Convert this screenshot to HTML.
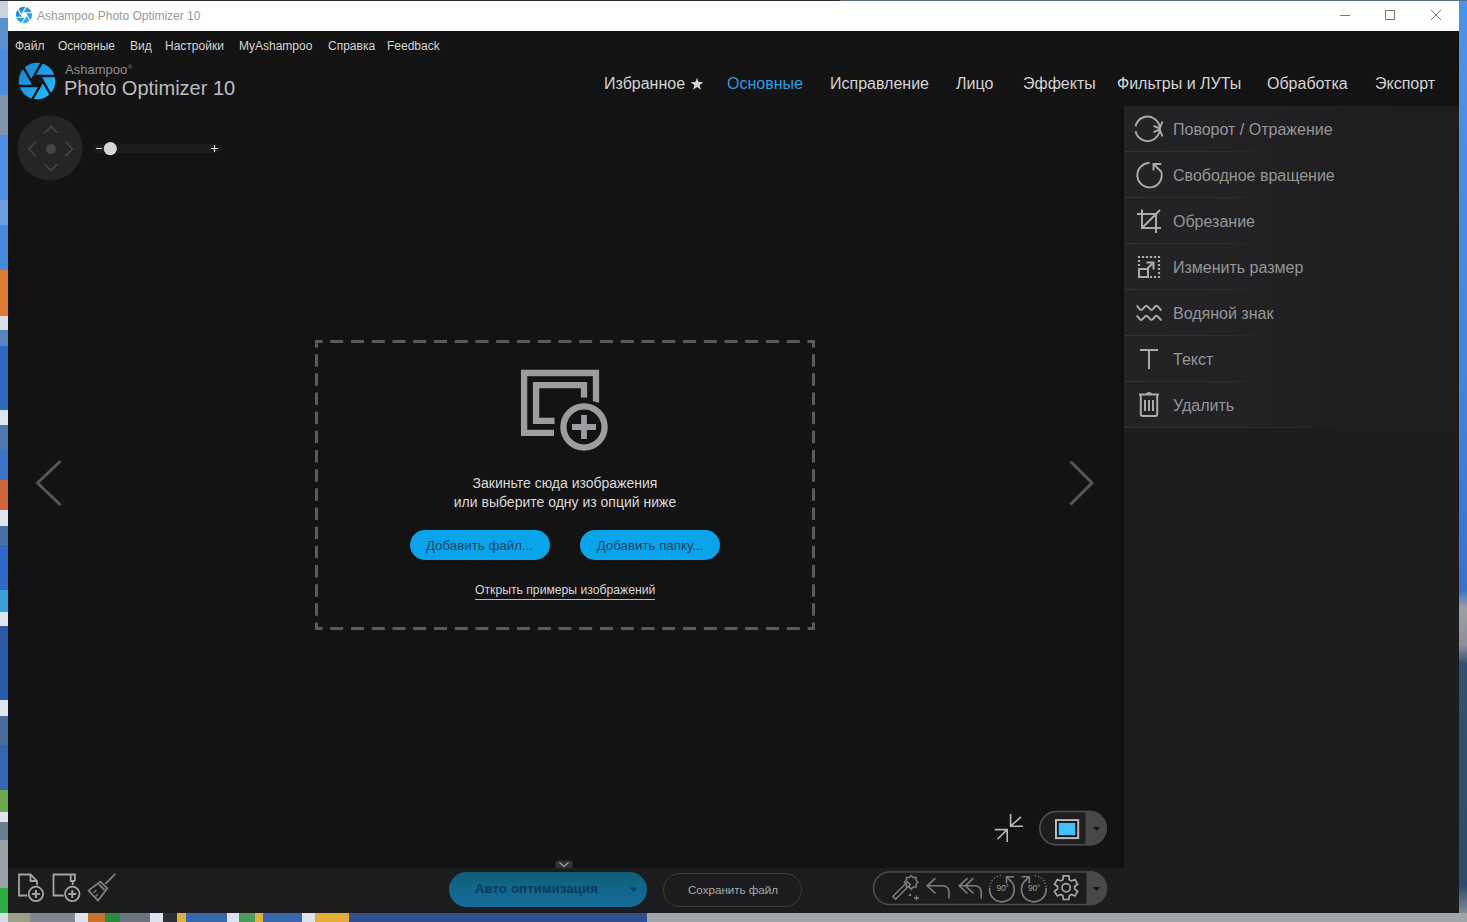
<!DOCTYPE html>
<html><head><meta charset="utf-8">
<style>
*{margin:0;padding:0;box-sizing:border-box}
html,body{width:1467px;height:922px;overflow:hidden;background:#131313;font-family:"Liberation Sans",sans-serif}
.a{position:absolute;white-space:nowrap}
svg{position:absolute;left:0;top:0;overflow:visible}
.menu{font-size:12px;color:#d6d6d6;top:39px}
.nav{font-size:16px;color:#d4d4d4;top:75px}
.pt{position:absolute;left:1173px;font-size:16px;color:#959595;white-space:nowrap}
.sep{position:absolute;left:1124px;height:1px;width:150px;background:linear-gradient(90deg,#333337 0%,#303034 55%,rgba(46,46,50,0) 100%)}
</style></head><body>
<!-- desktop strips -->
<div class="a" style="left:0;top:0px;width:8px;height:18px;background:#c9d3df"></div>
<div class="a" style="left:0;top:18px;width:8px;height:32px;background:#5c8fd0"></div>
<div class="a" style="left:0;top:50px;width:8px;height:45px;background:#4a8de0"></div>
<div class="a" style="left:0;top:95px;width:8px;height:40px;background:#7d93ad"></div>
<div class="a" style="left:0;top:135px;width:8px;height:65px;background:#4d8fe2"></div>
<div class="a" style="left:0;top:200px;width:8px;height:25px;background:#6b9de0"></div>
<div class="a" style="left:0;top:225px;width:8px;height:45px;background:#4688dc"></div>
<div class="a" style="left:0;top:270px;width:8px;height:46px;background:#e07a2e"></div>
<div class="a" style="left:0;top:316px;width:8px;height:14px;background:#d6e0ec"></div>
<div class="a" style="left:0;top:330px;width:8px;height:16px;background:#5a86c0"></div>
<div class="a" style="left:0;top:346px;width:8px;height:64px;background:#2f69bf"></div>
<div class="a" style="left:0;top:410px;width:8px;height:15px;background:#dbe4ef"></div>
<div class="a" style="left:0;top:425px;width:8px;height:25px;background:#4f78b0"></div>
<div class="a" style="left:0;top:450px;width:8px;height:30px;background:#3b74c8"></div>
<div class="a" style="left:0;top:480px;width:8px;height:30px;background:#d0643a"></div>
<div class="a" style="left:0;top:510px;width:8px;height:16px;background:#dde5ef"></div>
<div class="a" style="left:0;top:526px;width:8px;height:19px;background:#4a70a8"></div>
<div class="a" style="left:0;top:545px;width:8px;height:45px;background:#2e68c8"></div>
<div class="a" style="left:0;top:590px;width:8px;height:22px;background:#37a0d8"></div>
<div class="a" style="left:0;top:612px;width:8px;height:14px;background:#dde5ef"></div>
<div class="a" style="left:0;top:626px;width:8px;height:74px;background:#2a5aa8"></div>
<div class="a" style="left:0;top:700px;width:8px;height:16px;background:#dde5ef"></div>
<div class="a" style="left:0;top:716px;width:8px;height:29px;background:#4a6a98"></div>
<div class="a" style="left:0;top:745px;width:8px;height:45px;background:#3566b0"></div>
<div class="a" style="left:0;top:790px;width:8px;height:22px;background:#6aa84a"></div>
<div class="a" style="left:0;top:812px;width:8px;height:10px;background:#dde5ef"></div>
<div class="a" style="left:0;top:822px;width:8px;height:18px;background:#6a7f90"></div>
<div class="a" style="left:0;top:840px;width:8px;height:48px;background:#9aa0a8"></div>
<div class="a" style="left:0;top:888px;width:8px;height:25px;background:#2cae46"></div>
<div class="a" style="left:0;top:913px;width:8px;height:9px;background:#8f949c"></div>
<div class="a" style="left:1459px;top:0;width:8px;height:922px;background:linear-gradient(180deg,#4d92ea 0%,#4585dc 40%,#3b72c8 64%,#9aa0a6 66%,#8a9098 70%,#34506e 72%,#2f4a68 96%,#9aa0a8 100%)"></div>
<div class="a" style="left:0px;top:913px;width:8px;height:9px;background:#d6dde6"></div>
<div class="a" style="left:8px;top:913px;width:22px;height:9px;background:#9a9f86"></div>
<div class="a" style="left:30px;top:913px;width:45px;height:9px;background:#7f8794"></div>
<div class="a" style="left:75px;top:913px;width:13px;height:9px;background:#dce3ec"></div>
<div class="a" style="left:88px;top:913px;width:17px;height:9px;background:#c8702e"></div>
<div class="a" style="left:105px;top:913px;width:15px;height:9px;background:#2a8a40"></div>
<div class="a" style="left:120px;top:913px;width:30px;height:9px;background:#6a7380"></div>
<div class="a" style="left:150px;top:913px;width:13px;height:9px;background:#dce3ec"></div>
<div class="a" style="left:163px;top:913px;width:14px;height:9px;background:#2a2f38"></div>
<div class="a" style="left:177px;top:913px;width:9px;height:9px;background:#e0b040"></div>
<div class="a" style="left:186px;top:913px;width:41px;height:9px;background:#3a66ac"></div>
<div class="a" style="left:227px;top:913px;width:12px;height:9px;background:#dce3ec"></div>
<div class="a" style="left:239px;top:913px;width:16px;height:9px;background:#4a9a60"></div>
<div class="a" style="left:255px;top:913px;width:8px;height:9px;background:#e0b040"></div>
<div class="a" style="left:263px;top:913px;width:39px;height:9px;background:#3a66ac"></div>
<div class="a" style="left:302px;top:913px;width:13px;height:9px;background:#dce3ec"></div>
<div class="a" style="left:315px;top:913px;width:34px;height:9px;background:#e4ae34"></div>
<div class="a" style="left:349px;top:913px;width:298px;height:9px;background:#2f508e"></div>
<div class="a" style="left:647px;top:913px;width:820px;height:9px;background:#a0a4ab"></div>
<div class="a" style="left:0;top:0;width:840px;height:1px;background:#2e2e2e"></div><div class="a" style="left:840px;top:0;width:627px;height:1px;background:#5a6e88"></div>

<!-- title bar -->
<div class="a" style="left:8px;top:1px;width:1451px;height:30px;background:#fff"></div>
<svg width="1467" height="40">
  <defs><linearGradient id="gs" x1="0" y1="0" x2="1" y2="1"><stop offset="0" stop-color="#1584d8"/><stop offset="1" stop-color="#34b8f4"/></linearGradient></defs>
  <circle cx="24" cy="15" r="8.2" fill="url(#gs)"/>
  <path d="M26.60,15.00 L25.30,17.25 L22.70,17.25 L21.40,15.00 L22.70,12.75 L25.30,12.75Z" fill="#fff"/>
  <path d="M26.90,14.48L21.26,24.25M25.90,17.25L14.62,17.25M23.00,17.77L17.36,8.00M21.10,15.52L26.74,5.75M22.10,12.75L33.38,12.75M25.00,12.23L30.64,22.00" stroke="#fff" stroke-width="1.2" fill="none"/>
  <line x1="1340" y1="15.5" x2="1350" y2="15.5" stroke="#777" stroke-width="1"/>
  <rect x="1385.5" y="10.5" width="9" height="9" fill="none" stroke="#777" stroke-width="1"/>
  <path d="M1431 10L1441 20M1441 10L1431 20" stroke="#777" stroke-width="1"/>
</svg>
<div class="a" style="left:37px;top:9px;font-size:12px;color:#999">Ashampoo Photo Optimizer 10</div>

<!-- menu -->
<div class="a menu" style="left:15px">Файл</div>
<div class="a menu" style="left:58px">Основные</div>
<div class="a menu" style="left:130px">Вид</div>
<div class="a menu" style="left:165px">Настройки</div>
<div class="a menu" style="left:239px">MyAshampoo</div>
<div class="a menu" style="left:328px">Справка</div>
<div class="a menu" style="left:387px">Feedback</div>

<!-- logo -->
<svg width="100" height="110">
  <defs><linearGradient id="gl" x1="0" y1="0" x2="1" y2="1"><stop offset="0" stop-color="#1a7fd0"/><stop offset="0.5" stop-color="#16a0ee"/><stop offset="1" stop-color="#2ec0ff"/></linearGradient></defs>
  <circle cx="37" cy="81" r="18.3" fill="url(#gl)"/>
  <path d="M42.80,81.00 L39.90,86.02 L34.10,86.02 L31.20,81.00 L34.10,75.98 L39.90,75.98Z" fill="#131313"/>
  <path d="M43.10,80.48L31.80,100.05M40.50,86.02L17.90,86.02M34.40,86.54L23.10,66.97M30.90,81.52L42.20,61.95M33.50,75.98L56.10,75.98M39.60,75.46L50.90,95.03" stroke="#131313" stroke-width="2.4" fill="none"/>
</svg>
<div class="a" style="left:65px;top:62px;font-size:13px;color:#8e8e8e">Ashampoo<span style="font-size:5px;position:relative;top:-5px;left:1px">®</span></div>
<div class="a" style="left:64px;top:77px;font-size:20px;color:#bdbdbd">Photo Optimizer 10</div>

<!-- nav -->
<div class="a nav" style="left:604px">Избранное</div>
<svg width="720" height="100"><path d="M697.00,77.70 L698.59,82.12 L703.28,82.26 L699.57,85.13 L700.88,89.64 L697.00,87.00 L693.12,89.64 L694.43,85.13 L690.72,82.26 L695.41,82.12Z" fill="#d4d4d4"/></svg>
<div class="a nav" style="left:727px;color:#319de2">Основные</div>
<div class="a nav" style="left:830px">Исправление</div>
<div class="a nav" style="left:956px">Лицо</div>
<div class="a nav" style="left:1023px">Эффекты</div>
<div class="a nav" style="left:1117px">Фильтры и ЛУТы</div>
<div class="a nav" style="left:1267px">Обработка</div>
<div class="a nav" style="left:1375px">Экспорт</div>

<!-- right panel -->
<div class="a" style="left:1124px;top:106px;width:335px;height:807px;background:#1d1d1f"></div>
<div class="a" style="left:1124px;top:106px;width:335px;height:322px;background:linear-gradient(90deg,#232326 0%,#222225 35%,#1e1e20 68%,#1d1d1f 100%)"></div>
<div class="a" style="left:1119px;top:106px;width:5px;height:807px;background:linear-gradient(90deg,rgba(0,0,0,0),rgba(0,0,0,0.25))"></div>
<div class="sep" style="top:151px"></div>
<div class="sep" style="top:197px"></div>
<div class="sep" style="top:243px"></div>
<div class="sep" style="top:289px"></div>
<div class="sep" style="top:335px"></div>
<div class="sep" style="top:381px"></div>
<div class="sep" style="top:427px;width:225px"></div>
<div class="pt" style="top:121px">Поворот / Отражение</div>
<div class="pt" style="top:167px">Свободное вращение</div>
<div class="pt" style="top:213px">Обрезание</div>
<div class="pt" style="top:259px">Изменить размер</div>
<div class="pt" style="top:305px">Водяной знак</div>
<div class="pt" style="top:351px">Текст</div>
<div class="pt" style="top:397px">Удалить</div>
<svg width="1467" height="922" style="pointer-events:none">
 <g stroke="#ababab" fill="none" stroke-width="2">
  <!-- rotate/flip -->
  <path d="M1135.6 131.3 A12.2 12.2 0 1 0 1135.6 126.3" stroke-width="1.9"/>
  <path d="M1162.5 121.5L1159.5 129L1162.5 136.5M1153.5 125.8L1159.5 128.3M1153.5 132.2L1159.5 129.7" stroke-width="1.9"/>
  <!-- free rotate -->
  <path d="M1149.5 163 A12.2 12.2 0 1 0 1161 171" stroke-width="1.9"/>
  <path d="M1153.5 170.5V164H1161.2M1153.5 164L1161 171.5" stroke-width="1.9"/>
  <!-- crop -->
  <path d="M1142 209.5V228H1161M1137 214H1156V233M1142 228L1160 210"/>
  <!-- resize -->
  <rect x="1139" y="269" width="9" height="8"/>
  <path d="M1147 269L1153.5 262.5M1146.5 262.5H1153.5V269.5"/>
  <path d="M1139 257h0M1143 257h0M1147 257h0M1151 257h0M1155 257h0M1159 257h0M1159 261h0M1159 265h0M1159 269h0M1159 273h0M1159 277h0M1155 277h0M1151 277h0M1139 261h0M1139 265h0" stroke-width="2.2" stroke-linecap="square"/>
  <!-- watermark -->
  <path d="M1136.5 305.8C1138.6 306.5 1139.4 310 1141.2 310S1144.5 305.8 1146.4 305.8S1149.7 310 1151.5 310S1154.7 305.8 1156.5 305.8S1159.6 309.5 1161.5 310.2"/>
  <path d="M1136.5 315.8C1138.6 316.5 1139.4 320 1141.2 320S1144.5 315.8 1146.4 315.8S1149.7 320 1151.5 320S1154.7 315.8 1156.5 315.8S1159.6 319.5 1161.5 320.2"/>
  <!-- text T -->
  <path d="M1140 350H1158M1149 350V369"/>
  <!-- trash -->
  <path d="M1139 394.5H1159M1146 394.5Q1149 391.5 1152 394.5M1140.8 394.5V414A2 2 0 0 0 1142.8 416H1155.2A2 2 0 0 0 1157.2 414V394.5M1145 400V411M1149 400V411M1153 400V411"/>
 </g>
</svg>

<!-- joystick + slider -->
<svg width="260" height="200">
  <circle cx="50" cy="148" r="32.5" fill="#252527"/>
  <circle cx="51" cy="149" r="5" fill="#454547"/>
  <g stroke="#444446" stroke-width="1.6" fill="none">
    <path d="M44.5 133L51 126.5L57.5 133"/>
    <path d="M44.5 164L51 170.5L57.5 164"/>
    <path d="M36 141.5L29 149L36 156.5"/>
    <path d="M65.5 141.5L72.5 149L65.5 156.5"/>
  </g>
  <rect x="93" y="144" width="128" height="9" rx="4.5" fill="#1c1c1e"/>
  <path d="M96 148.5H102M211 148.5H218M214.5 145V152" stroke="#d8d8d8" stroke-width="1.2"/>
  <circle cx="110.3" cy="148.6" r="6.6" fill="#d6d6da"/>
</svg>

<!-- side arrows -->
<svg width="1467" height="922" style="pointer-events:none">
  <path d="M60.5 461L37.5 483L60.5 505" stroke="#555557" stroke-width="3" fill="none"/>
  <path d="M1070.5 461.5L1092 483L1070.5 504.5" stroke="#555557" stroke-width="3" fill="none"/>
  <!-- dashed drop zone -->
  <path d="M330.2 340.0h13.0v3.0h-13.0zM351.0 340.0h13.0v3.0h-13.0zM371.8 340.0h13.0v3.0h-13.0zM392.5 340.0h13.0v3.0h-13.0zM413.2 340.0h13.0v3.0h-13.0zM434.0 340.0h13.0v3.0h-13.0zM454.8 340.0h13.0v3.0h-13.0zM475.5 340.0h13.0v3.0h-13.0zM496.2 340.0h13.0v3.0h-13.0zM517.0 340.0h13.0v3.0h-13.0zM537.8 340.0h13.0v3.0h-13.0zM558.5 340.0h13.0v3.0h-13.0zM579.2 340.0h13.0v3.0h-13.0zM600.0 340.0h13.0v3.0h-13.0zM620.8 340.0h13.0v3.0h-13.0zM641.5 340.0h13.0v3.0h-13.0zM662.2 340.0h13.0v3.0h-13.0zM683.0 340.0h13.0v3.0h-13.0zM703.8 340.0h13.0v3.0h-13.0zM724.5 340.0h13.0v3.0h-13.0zM745.2 340.0h13.0v3.0h-13.0zM766.0 340.0h13.0v3.0h-13.0zM786.8 340.0h13.0v3.0h-13.0zM330.2 627.0h13.0v3.0h-13.0zM351.0 627.0h13.0v3.0h-13.0zM371.8 627.0h13.0v3.0h-13.0zM392.5 627.0h13.0v3.0h-13.0zM413.2 627.0h13.0v3.0h-13.0zM434.0 627.0h13.0v3.0h-13.0zM454.8 627.0h13.0v3.0h-13.0zM475.5 627.0h13.0v3.0h-13.0zM496.2 627.0h13.0v3.0h-13.0zM517.0 627.0h13.0v3.0h-13.0zM537.8 627.0h13.0v3.0h-13.0zM558.5 627.0h13.0v3.0h-13.0zM579.2 627.0h13.0v3.0h-13.0zM600.0 627.0h13.0v3.0h-13.0zM620.8 627.0h13.0v3.0h-13.0zM641.5 627.0h13.0v3.0h-13.0zM662.2 627.0h13.0v3.0h-13.0zM683.0 627.0h13.0v3.0h-13.0zM703.8 627.0h13.0v3.0h-13.0zM724.5 627.0h13.0v3.0h-13.0zM745.2 627.0h13.0v3.0h-13.0zM766.0 627.0h13.0v3.0h-13.0zM786.8 627.0h13.0v3.0h-13.0zM315.0 354.2h3.0v12.5h-3.0zM315.0 373.3h3.0v12.5h-3.0zM315.0 392.5h3.0v12.5h-3.0zM315.0 411.7h3.0v12.5h-3.0zM315.0 430.8h3.0v12.5h-3.0zM315.0 450.0h3.0v12.5h-3.0zM315.0 469.2h3.0v12.5h-3.0zM315.0 488.3h3.0v12.5h-3.0zM315.0 507.5h3.0v12.5h-3.0zM315.0 526.7h3.0v12.5h-3.0zM315.0 545.8h3.0v12.5h-3.0zM315.0 565.0h3.0v12.5h-3.0zM315.0 584.2h3.0v12.5h-3.0zM315.0 603.3h3.0v12.5h-3.0zM812.0 354.2h3.0v12.5h-3.0zM812.0 373.3h3.0v12.5h-3.0zM812.0 392.5h3.0v12.5h-3.0zM812.0 411.7h3.0v12.5h-3.0zM812.0 430.8h3.0v12.5h-3.0zM812.0 450.0h3.0v12.5h-3.0zM812.0 469.2h3.0v12.5h-3.0zM812.0 488.3h3.0v12.5h-3.0zM812.0 507.5h3.0v12.5h-3.0zM812.0 526.7h3.0v12.5h-3.0zM812.0 545.8h3.0v12.5h-3.0zM812.0 565.0h3.0v12.5h-3.0zM812.0 584.2h3.0v12.5h-3.0zM812.0 603.3h3.0v12.5h-3.0zM315.0 340.0h7.5v3.0h-7.5zM315.0 340.0h3.0v7.5h-3.0zM807.5 340.0h7.5v3.0h-7.5zM812.0 340.0h3.0v7.5h-3.0zM315.0 627.0h7.5v3.0h-7.5zM315.0 622.5h3.0v7.5h-3.0zM807.5 627.0h7.5v3.0h-7.5zM812.0 622.5h3.0v7.5h-3.0z" fill="#5a5a5a"/>
  <!-- drop icon -->
  <g fill="none" stroke="#9d9da1" stroke-width="6.3">
    <path d="M554 432.9H524.1V373H596V402.5"/>
    <path d="M554.5 420.8H536.1V385.1H584V397.5"/>
  </g>
  <circle cx="584" cy="427" r="27.5" fill="#131313"/>
  <circle cx="584" cy="427" r="20.6" fill="none" stroke="#9d9da1" stroke-width="6.3"/>
  <path d="M572 427H596M584 415V439" stroke="#9d9da1" stroke-width="5.8"/>
</svg>
<div class="a" style="left:315px;top:474px;width:500px;text-align:center;font-size:14px;line-height:19px;color:#dadada">Закиньте сюда изображения<br>или выберите одну из опций ниже</div>
<div class="a" style="left:409.5px;top:530px;width:140px;height:30px;border-radius:15px;background:#0aa4eb;color:#17456a;font-size:13.3px;text-align:center;line-height:32px">Добавить файл...</div>
<div class="a" style="left:580px;top:530px;width:140px;height:30px;border-radius:15px;background:#0aa4eb;color:#17456a;font-size:13.3px;text-align:center;line-height:32px">Добавить папку...</div>
<div class="a" style="left:475px;top:583px;font-size:12.2px;color:#d8d8d8">Открыть примеры изображений</div>
<div class="a" style="left:475px;top:598.5px;width:180px;height:1px;background:#bdbdbd"></div>

<!-- view controls -->
<svg width="1467" height="922" style="pointer-events:none">
  <g stroke="#b8b8b8" stroke-width="1.6" fill="none">
    <path d="M1021 816.8L1010.6 826.2M1010.6 814V826.2H1023"/>
    <path d="M997.4 839.2L1007.2 829.6M994.8 829.6H1007.2V842"/>
  </g>
  <rect x="1039.8" y="811.6" width="66.4" height="33.2" rx="16.6" fill="#1e1e20" stroke="#505052" stroke-width="1.5"/>
  <path d="M1085.5 810.85H1089.6A17.35 17.35 0 0 1 1089.6 845.55H1085.5Z" fill="#48484a"/>
  <path d="M1093 827L1100 827L1096.5 831Z" fill="#141414"/>
  <rect x="1055" y="819.1" width="24.2" height="20" fill="#bcbcc0"/>
  <rect x="1057" y="821.1" width="20.2" height="16" fill="#111114"/>
  <rect x="1058.7" y="822.9" width="16.6" height="12.3" fill="#3fc3f8"/>
</svg>

<!-- bottom toolbar -->
<div class="a" style="left:8px;top:868px;width:1116px;height:45px;background:#1c1c1e"></div>
<svg width="1467" height="922" style="pointer-events:none">
  <!-- add file -->
  <g stroke="#a4a4a4" stroke-width="1.8" fill="none">
    <path d="M36.5 895.5H19V874.5H30.5L37 881V886"/>
    <path d="M30.5 874.5V881H37"/>
    <circle cx="35.9" cy="893.9" r="8.9" fill="#1c1c1e" stroke="none"/>
    <circle cx="35.9" cy="893.9" r="7.2"/>
    <path d="M31.9 893.9H39.9M35.9 889.9V897.9" stroke-width="2"/>
    <!-- add folder-file -->
    <path d="M72.5 895.5H53.5V874.5H74.9V881"/>
    <path d="M70.7 874.5V881H74.9M72.7 881V886"/>
    <circle cx="72.3" cy="893.9" r="8.9" fill="#1c1c1e" stroke="none"/>
    <circle cx="72.3" cy="893.9" r="7.2"/>
    <path d="M68.3 893.9H76.3M72.3 889.9V897.9" stroke-width="2"/>
  </g>
  <g stroke="#7e7e7e" stroke-width="1.8" fill="none">
    <path d="M115.3 873.8L105.4 883.9"/>
    <path d="M100.3 881.6L107.3 888.4L98 900.6L88.5 890.5Z"/>
    <path d="M98.6 884.2L104.6 890"/>
    <path d="M96.4 889.9L93.7 892.9M97.6 894.2L95.6 896.6" stroke-width="1.4"/>
  </g>
  <!-- collapse tab -->
  <path d="M555.5 868.5V863A2.5 2.5 0 0 1 558 860.5H570A2.5 2.5 0 0 1 572.5 863V868.5Z" fill="#313133"/>
  <path d="M559.5 862.5L564 866.5L568.5 862.5" stroke="#a8a8a8" stroke-width="1.2" fill="none"/>
</svg>
<div class="a" style="left:449px;top:871.5px;width:198px;height:35.5px;border-radius:17.75px;background:linear-gradient(180deg,#0f5d74 0%,#11668c 45%,#136a96 100%)"></div>
<div class="a" style="left:475px;top:881px;font-size:13px;font-weight:bold;color:#0d3a5c;letter-spacing:0.2px">Авто оптимизация</div>
<svg width="1467" height="922" style="pointer-events:none">
  <path d="M629.8 887.6H637.6L633.7 891.8Z" fill="#0b3658"/>
</svg>
<div class="a" style="left:662.5px;top:872.5px;width:139px;height:34px;border-radius:17px;border:1px solid #3c3c3e;background:#1c1c1e"></div>
<div class="a" style="left:688px;top:883px;font-size:11.6px;color:#a8a8a8">Сохранить файл</div>

<!-- tool pill -->
<svg width="1467" height="922" style="pointer-events:none">
  <rect x="873.5" y="872" width="233" height="32.5" rx="16.25" fill="#1c1c1e" stroke="#4a4a4c" stroke-width="1.6"/>
  <path d="M1086.5 871.2H1090.25A17.05 17.05 0 0 1 1090.25 905.3H1086.5Z" fill="#48484a"/>
  <path d="M1093 887L1100 887L1096.5 891Z" fill="#141414"/>
  <g stroke="#7c7c7e" stroke-width="1.5" fill="none">
    <!-- wand -->
    <path d="M892.8 896.5L907.5 881.8L910.3 884.6L895.6 899.3Z"/>
    <path d="M911.20,875.50 L913.19,877.50 L916.01,877.49 L916.00,880.31 L918.00,882.30 L916.00,884.29 L916.01,887.11 L913.19,887.10 L911.20,889.10 L909.21,887.10 L906.39,887.11 L906.40,884.29 L904.40,882.30 L906.40,880.31 L906.39,877.49 L909.21,877.50Z"/>
    <path d="M914 898H919M916.5 895.5V900.5" stroke-width="1.3"/>
  </g>
  <circle cx="910" cy="895" r="1.3" fill="#7c7c7e"/>
  <g stroke="#7c7c7e" stroke-width="1.6" fill="none">
    <!-- undo -->
    <path d="M935.4 878.2L927.2 885.8L935.4 893.4M927.5 885.8H943A6 6 0 0 1 949 891.8V898.5"/>
    <!-- undo all -->
    <path d="M967.5 878.2L959.3 885.8L967.5 893.4M973.5 878.2L965.3 885.8L973.5 893.4M960 885.8H975.2A6 6 0 0 1 981.2 891.8V898.5"/>
    <!-- rotate left 90 -->
    <path d="M1009.5 879.8A12.3 12.3 0 1 1 989.7 888"/>
    <path d="M1006.5 883.3V876.8H1014M1006.5 876.8L1011 881.3"/>
    <!-- rotate right 90 -->
    <path d="M1026.2 879.8A12.3 12.3 0 1 0 1046 888"/>
    <path d="M1029.3 883.3V876.8H1021.8M1029.3 876.8L1024.8 881.3"/>
  </g>
  <g stroke="#7c7c7e" stroke-width="1.4" fill="none" stroke-dasharray="1.2 2">
    <path d="M989.7 887A12.3 12.3 0 0 1 1002 875.5"/>
    <path d="M1046 887A12.3 12.3 0 0 0 1033.7 875.5"/>
  </g>
  <text x="1002.5" y="890.8" font-size="8.5" fill="#9a9a9c" text-anchor="middle" font-family="Liberation Sans" letter-spacing="-0.3">90°</text>
  <text x="1034" y="890.8" font-size="8.5" fill="#9a9a9c" text-anchor="middle" font-family="Liberation Sans" letter-spacing="-0.3">90°</text>
  <!-- gear -->
  <g transform="translate(1066.1,887.7)" fill="none" stroke="#a6a6a8" stroke-width="1.7">
    <path d="M-2.72,-11.79 L2.72,-11.79 L3.22,-7.97 L5.29,-6.78 L8.85,-8.25 L11.57,-3.54 L8.52,-1.20 L8.52,1.20 L11.57,3.54 L8.85,8.25 L5.29,6.78 L3.22,7.97 L2.72,11.79 L-2.72,11.79 L-3.22,7.97 L-5.29,6.78 L-8.85,8.25 L-11.57,3.54 L-8.52,1.20 L-8.52,-1.20 L-11.57,-3.54 L-8.85,-8.25 L-5.29,-6.78 L-3.22,-7.97Z"/>
    <circle r="4.1"/>
  </g>
</svg>
</body></html>
